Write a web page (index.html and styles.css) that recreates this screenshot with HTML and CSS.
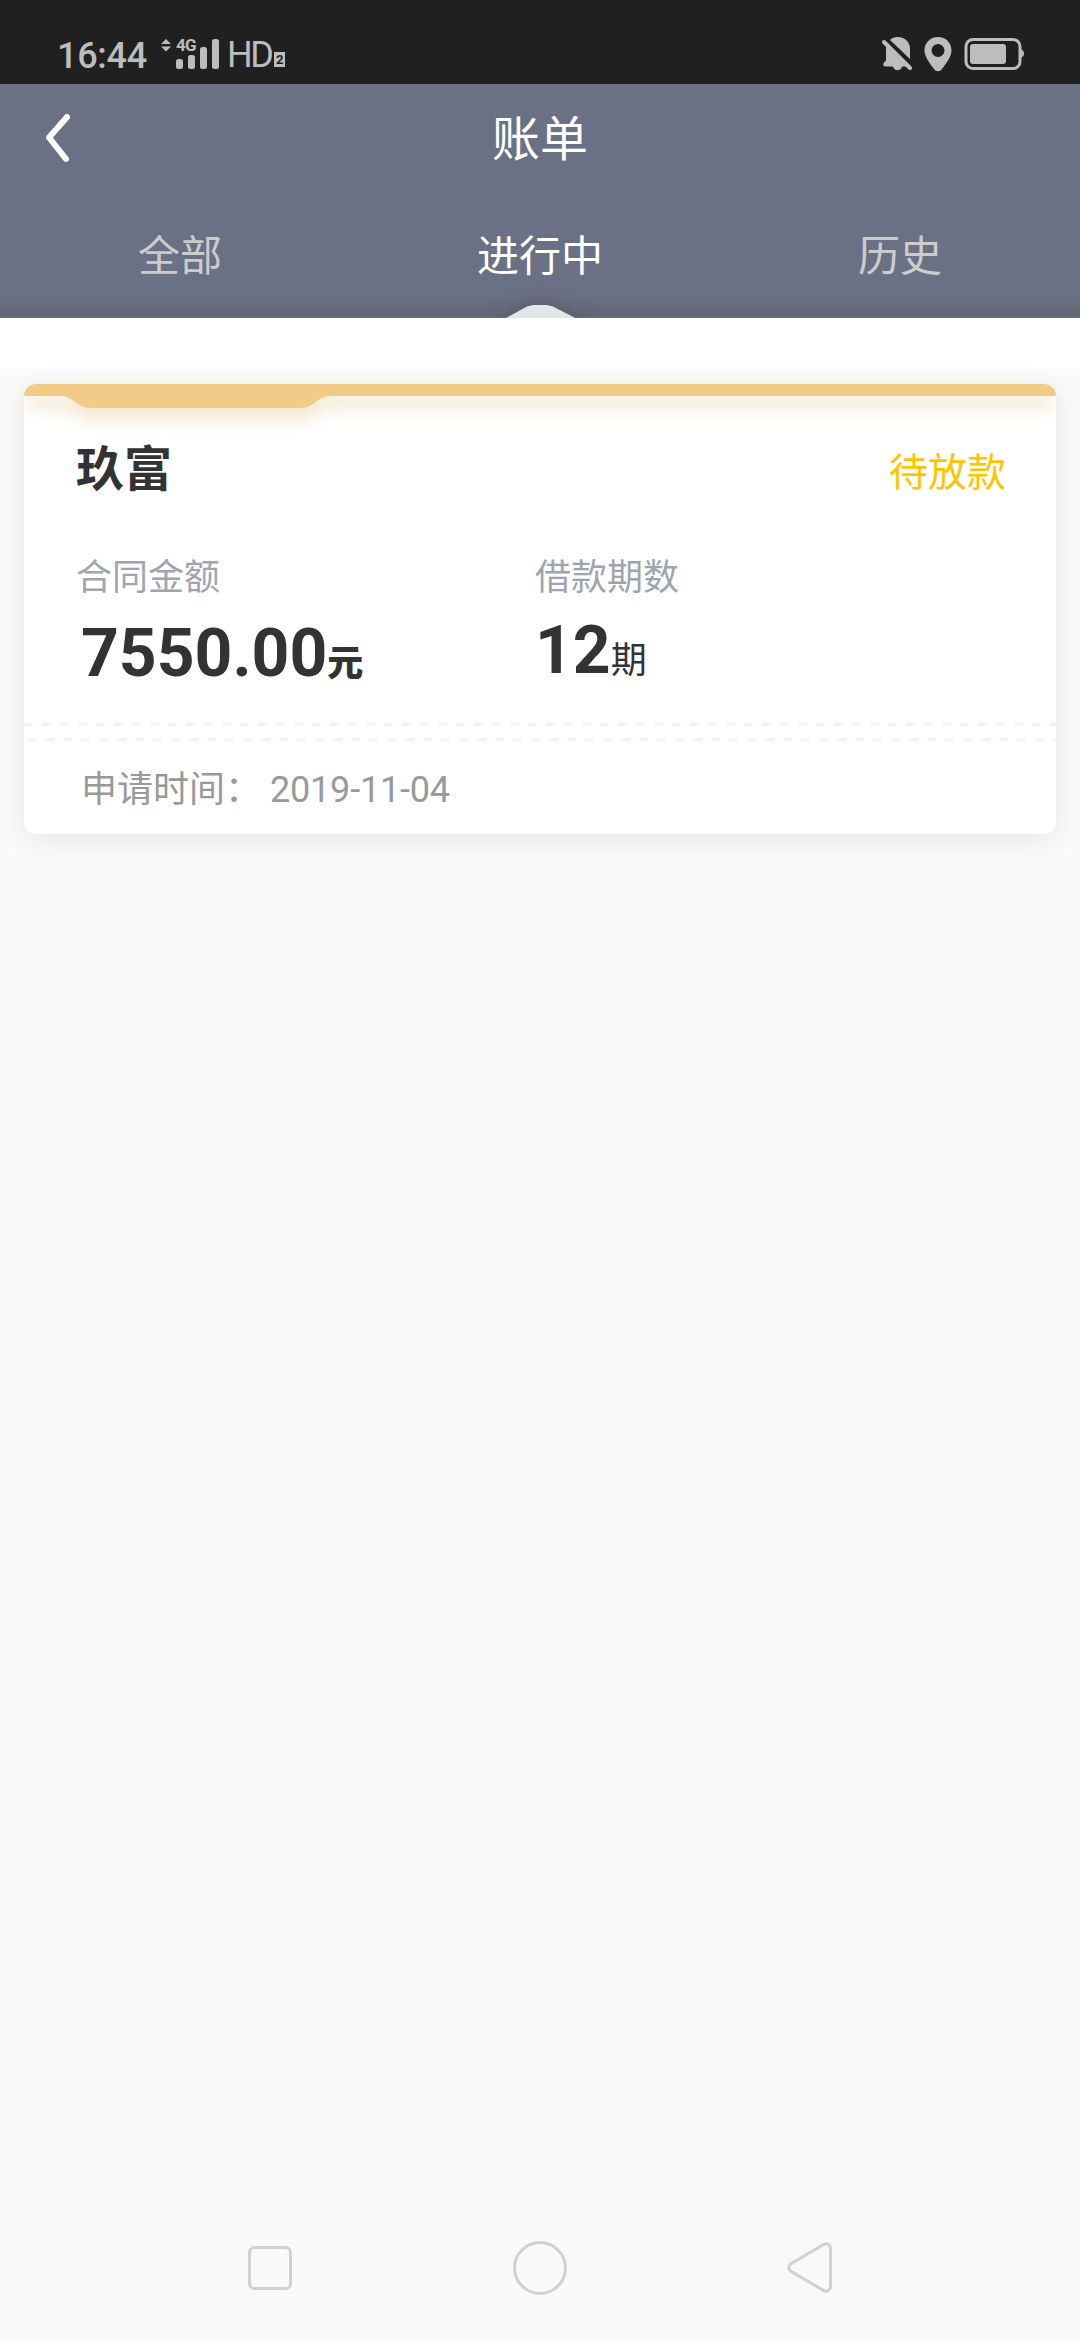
FILE: index.html
```
<!DOCTYPE html>
<html lang="zh">
  <head>
    <meta charset="UTF-8" />
    <meta name="viewport" content="width=device-width, initial-scale=1.0" />
    <title>账单</title>
    <link rel="stylesheet" href="styles.css" />
  </head>

  <body>
    <div class="status">
      <div class="status-left">
        <span class="time">16:44</span>
        <span class="net">
          <svg width="60" height="34" viewBox="0 0 60 34">
            <path d="M0 6l5-5 5 5zM0 8.500l5 5 5-5z" />
            <rect x="15" y="21" width="7" height="10" rx="2.500" />
            <rect x="27" y="17" width="7" height="14" rx="2.500" />
            <rect x="39" y="9" width="7" height="22" rx="2.500" />
            <rect x="51" y="1" width="7" height="30" rx="2.500" />
          </svg>
          <span class="net-type">4G</span>
        </span>
        <span class="hd">HD</span>
        <span class="sim">2</span>
      </div>
      <div class="status-right">
        <svg width="30" height="36" viewBox="0 0 30 36">
          <path d="M8 4C11 1 14 1 16 1c7 0 12 5 12 12v10z" />
          <path d="M4 10l20 20.500h-4c-1 5-8 5-9 0H3c-2 0-2-3-1-4l2-2z" />
          <path class="slash" d="M2 6l26 26" />
        </svg>
        <svg width="28" height="36" viewBox="0 0 28 36">
          <path fill-rule="evenodd" d="M14 1C6 1 .5 7 .5 14.500c0 6 5 12.500 9.500 18.500 2 3 6 3 8 0 4.500-6 9.500-12.500 9.500-18.500C27.500 7 22 1 14 1zm0 7a6.500 6.500 0 1 1 0 13 6.500 6.500 0 0 1 0-13z" />
        </svg>
        <svg width="62" height="36" viewBox="0 0 62 36">
          <rect class="shell" x="2" y="3.500" width="54" height="29" rx="7" />
          <rect x="6" y="8" width="36" height="20" rx="3" />
          <path d="M57 13.500c4 1 4 7 0 8z" />
        </svg>
      </div>
    </div>

    <div class="header">
      <div class="title">
        <svg class="back" width="24" height="50" viewBox="0 0 24 50">
          <path d="M21 4L3 24.500 20 46" />
        </svg>
        账单
      </div>
      <ul class="tabs">
        <li>全部</li>
        <li class="active">
          进行中
          <svg class="arrow" width="120" height="40" viewBox="0 0 120 40">
            <path d="M14 40L46 22.500Q50 21 53 21H65Q68 21 72 22.500L106 40z" />
          </svg>
        </li>
        <li>历史</li>
      </ul>
    </div>
    <div class="blank"></div>

    <div class="card">
      <svg class="card-top" width="1032" height="60" viewBox="0 0 1032 60">
        <path d="M0 12A12 12 0 0 1 12 0H1020A12 12 0 0 1 1032 12H310C290 12 292 24 276 24H68C52 24 50 12 36 12z" />
      </svg>
      <div class="card-head">
        <span class="name">玖富</span>
        <span class="state">待放款</span>
      </div>
      <div class="info">
        <div class="item">
          <div class="label">合同金额</div>
          <div class="value money">7550.00<b>元</b></div>
        </div>
        <div class="item">
          <div class="label">借款期数</div>
          <div class="value">12<span>期</span></div>
        </div>
      </div>
      <div class="dash"></div>
      <div class="dash second"></div>
      <div class="apply"><span>申请时间：</span><span class="date">2019-11-04</span></div>
    </div>

    <div class="nav">
      <svg width="60" height="60" viewBox="0 0 60 60">
        <rect x="9.500" y="9.500" width="41" height="41" rx="5" />
      </svg>
      <svg width="60" height="60" viewBox="0 0 60 60">
        <circle cx="30" cy="30" r="25.500" />
      </svg>
      <svg width="60" height="60" viewBox="0 0 60 60">
        <path d="M10.500 26L43.500 6.500Q49.500 4 50.500 10V49Q49.500 55 43.500 52.500L10.500 33Q7 29.500 10.500 26z" />
      </svg>
    </div>
  </body>
</html>
```
FILE: styles.css
```
body {
  margin: 0;
  height: 2340px;
  display: flex;
  flex-direction: column;
  background: #fafafa;
  font-family: Roboto, "Noto Sans CJK SC", sans-serif;
  color: #333;
}
svg {
  display: block;
}
ul {
  list-style: none;
  margin: 0;
  padding: 0;
}

/* 状态栏 */
.status {
  height: 84px;
  box-sizing: border-box;
  padding: 36px 54px 0 57px;
  display: flex;
  justify-content: space-between;
  background: #202020;
  color: #bdbdbd;
}
.status svg {
  fill: #bdbdbd;
}
.status-left,
.status-right {
  display: flex;
  align-items: flex-start;
}
.time {
  width: 104px;
  font-size: 36px;
  font-weight: 500;
  line-height: 40px;
  letter-spacing: -0.3px;
}
.net {
  position: relative;
  margin: 2px 6px 0 0;
}
.net-type {
  position: absolute;
  left: 15px;
  top: 0;
  font-size: 17px;
  font-weight: 700;
  line-height: 14px;
  letter-spacing: -0.7px;
}
.hd {
  font-size: 36px;
  line-height: 39px;
  letter-spacing: -2.5px;
}
.sim {
  width: 11px;
  height: 15px;
  margin: 16px 0 0 3px;
  background: #bdbdbd;
  color: #202020;
  font-size: 13px;
  font-weight: 700;
  line-height: 16px;
  text-align: center;
}
.status-right {
  gap: 12px;
}
.status .slash {
  stroke: #bdbdbd;
  stroke-width: 4;
  stroke-linecap: round;
}
.status .shell {
  fill: none;
  stroke: #bdbdbd;
  stroke-width: 3;
}

/* 头部 */
.header {
  height: 234px;
  background: linear-gradient(#6a7184 210px, #636575 232px, #73737f);
  color: #fff;
}
.title {
  position: relative;
  height: 110px;
  font-size: 48px;
  line-height: 112px;
  text-align: center;
}
.back {
  position: absolute;
  left: 46px;
  top: 29px;
  fill: none;
  stroke: #fff;
  stroke-width: 6;
  stroke-linecap: round;
  stroke-linejoin: round;
}
.tabs {
  display: flex;
}
.tabs li {
  flex: 1;
  position: relative;
  height: 124px;
  font-size: 42px;
  line-height: 126px;
  text-align: center;
  color: #ccc;
}
.tabs li.active {
  color: #fff;
}
.arrow {
  position: absolute;
  left: 121px;
  bottom: -6px;
  fill: #e4e5ea;
  filter: drop-shadow(0 0 8px rgba(80, 70, 80, 0.5));
}
/* 盖住箭头下方多出的部分 */
.blank {
  position: relative;
  height: 51px;
  background: #fff;
}

/* 账单卡片 */
.card {
  position: relative;
  height: 450px;
  margin: 15px 24px 0;
  border-radius: 12px;
  background: #fff;
  box-shadow: 0 6px 30px rgba(0, 0, 0, 0.08);
}
.card-top {
  position: absolute;
  left: 0;
  top: 0;
  fill: #f2cb87;
  filter: drop-shadow(0 12px 8px rgba(220, 190, 120, 0.35));
}
.card-head {
  display: flex;
  justify-content: space-between;
  padding: 50px 50px 0 52px;
  height: 72px;
  line-height: 72px;
}
.name {
  font-size: 48px;
  font-weight: 700;
}
.state {
  padding-top: 3px;
  font-size: 39px;
  color: #ffc400;
}
.info {
  display: flex;
  height: 217px;
  padding: 0 52px;
}
.item {
  width: 459px;
  padding-top: 46px;
}
.label {
  font-size: 36px;
  line-height: 52px;
  color: #9ea5ae;
}
.value {
  padding-top: 5px;
  font-size: 66px;
  font-weight: 700;
  line-height: 84px;
}
.value b,
.value span {
  font-size: 36px;
}
.value span {
  font-weight: 400;
}
.money {
  padding: 8px 0 0 5px;
}
.dash {
  height: 3px;
  background: linear-gradient(90deg, #f3f3f3 50%, transparent 50%);
  background-size: 18px 3px;
}
.second {
  margin-top: 12px;
  background-position: 3px 0;
}
.apply {
  display: flex;
  gap: 9px;
  padding: 21px 0 0 57px;
  font-size: 36px;
  line-height: 56px;
  color: #999;
}
.date {
  letter-spacing: -0.2px;
}

/* 底部导航键 */
.nav {
  height: 144px;
  margin-top: auto;
  display: flex;
  align-items: center;
  justify-content: center;
  gap: 210px;
  background: #f9f9f9;
}
.nav svg {
  fill: none;
  stroke: #d0d0d0;
  stroke-width: 3;
}
```
